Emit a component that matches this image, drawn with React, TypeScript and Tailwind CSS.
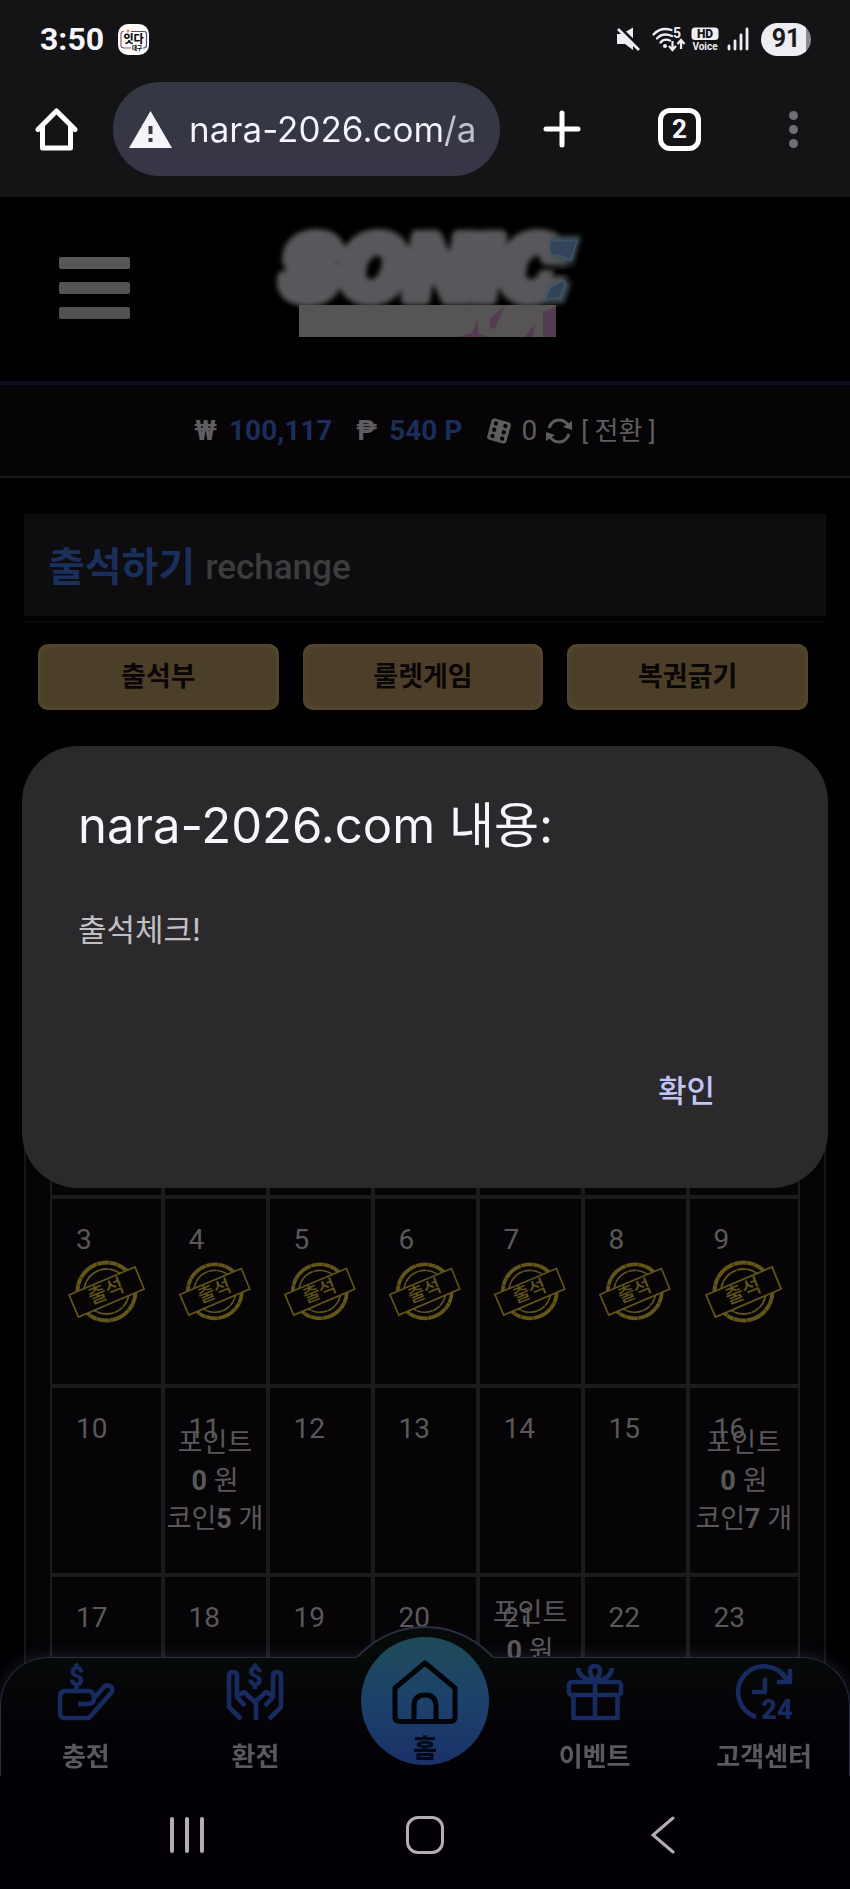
import { useState } from 'react';
import type { ReactNode } from 'react';

type DayItem = {
  day: number | null;
  stamped?: boolean;
  coin?: number;
};

const WEEKDAYS = ['일', '월', '화', '수', '목', '금', '토'];

// coins granted as a bonus on these days
const BONUS: Record<number, number> = { 11: 5, 16: 7, 21: 10 };

const buildWeeks = (): DayItem[][] => {
  const weeks: DayItem[][] = [];
  for (let w = 0; w < 6; w++) {
    const row: DayItem[] = [];
    for (let d = 0; d < 7; d++) {
      const day = w * 7 + d - 4;
      if (day < 1 || day > 31) row.push({ day: null });
      else row.push({ day, stamped: day < 10, coin: BONUS[day] });
    }
    weeks.push(row);
  }
  return weeks;
};

function StatusBar() {
  return (
    <div className="flex h-[78px] shrink-0 items-center pl-10 pr-[39px]">
      <span className="font-['Roboto',sans-serif] text-[32px] leading-10 font-bold">3:50</span>
      <svg className="ml-[14px] h-[31px] w-[31px]" viewBox="0 0 31 31" aria-hidden="true">
        <rect width="31" height="31" rx="10" fill="#fdfdfd" />
        <path d="M6 7.5H5.5Q3 7.5 3 10V21Q3 24 6 24H13" fill="none" stroke="#a0527a" strokeWidth="1.2" />
        <path d="M13 7.5H26Q28.5 7.5 28.5 10V21Q28.5 24 26 24H25" fill="none" stroke="#5b4a78" strokeWidth="1.2" />
        <circle cx="10" cy="7" r="1.5" fill="#e08a55" />
        <text x="15.5" y="18.5" textAnchor="middle" fontSize="11" fontWeight="900" fill="#111" fontFamily="'Noto Sans CJK KR', sans-serif">잇다</text>
        <text x="19" y="25.5" textAnchor="middle" fontSize="5.5" fontWeight="900" fill="#111" fontFamily="'Noto Sans CJK KR', sans-serif">대구</text>
      </svg>

      <div className="ml-auto flex items-center">
        <svg className="h-6 w-6" viewBox="0 0 24 24" aria-hidden="true">
          <path d="M1 7H6L17 0.5V23L9 17H1Z" fill="#eeedf2" />
          <path d="M2 -1L26 22" stroke="#141417" strokeWidth="3" />
          <path d="M2 2L23 23" stroke="#eeedf2" strokeWidth="2.6" />
        </svg>
        <svg className="ml-3 h-6 w-[34px] overflow-visible" viewBox="0 0 34 24" aria-hidden="true">
          <g fill="none" stroke="#eeedf2" strokeWidth="2.3" strokeLinecap="round">
            <path d="M1.5 7.5C6 2.5 13 1 19.5 3" />
            <path d="M5 11.5C8.5 7.5 14 6.5 20 9" />
            <path d="M8.5 15.5C11 12.5 14.5 12 18 13.5" />
          </g>
          <circle cx="13" cy="19" r="2" fill="#eeedf2" />
          <text x="21" y="11" fontSize="14" fontWeight="700" fill="#eeedf2" fontFamily="Roboto, sans-serif">5</text>
          <path d="M20.5 14V22M17 19L20.5 23L24 19M29 22V14M25.5 17L29 13L32.5 17" fill="none" stroke="#eeedf2" strokeWidth="2.2" />
        </svg>
        <svg className="ml-[5px] h-6 w-7 overflow-visible" viewBox="0 0 28 24" aria-hidden="true">
          <rect x="0.5" y="0.5" width="27" height="12.5" rx="3.5" fill="#eeedf2" />
          <text x="14" y="10.8" textAnchor="middle" fontSize="12" fontWeight="900" fill="#141417" fontFamily="Roboto, sans-serif">HD</text>
          <text x="14" y="22.5" textAnchor="middle" fontSize="10" fontWeight="700" fill="#eeedf2" fontFamily="Roboto, sans-serif">Voice</text>
        </svg>
        <svg className="ml-2 h-6 w-[22px]" viewBox="0 0 22 24" aria-hidden="true">
          <path d="M2 19V22M8 14V22M14 8V22M20 2V22" stroke="#eeedf2" strokeWidth="2.8" strokeLinecap="round" />
        </svg>
        <span className="ml-3 flex h-[33px] w-[50px] items-center justify-center rounded-full bg-[linear-gradient(to_right,#eeedf2_90%,#8b8a8f_90%)] font-['Roboto',sans-serif] text-[25px] leading-8 font-bold text-[#1a1a1d]">
          91
        </span>
      </div>
    </div>
  );
}

function BrowserToolbar() {
  return (
    <div className="flex shrink-0 items-center pt-1 pr-[52px] pb-[21px] pl-[35px]">
      <button type="button" aria-label="홈페이지">
        <svg className="h-[43px] w-[43px]" viewBox="0 0 43 43" fill="none" stroke="#fff" strokeWidth="5" strokeLinecap="round" strokeLinejoin="round" aria-hidden="true">
          <path d="M3 21.5L21.5 3L40 21.5" />
          <path d="M7.5 18V40H35.5V18" />
        </svg>
      </button>
      <div className="ml-[35px] flex h-[94px] min-w-0 flex-1 items-center rounded-full bg-linear-to-b from-[#333843] to-[#383546] pr-3 pl-4">
        <svg className="h-[37px] w-[43px] shrink-0" viewBox="0 0 43 37" aria-hidden="true">
          <path d="M21.5 0L43 37H0Z" fill="#f4f4fa" />
          <path d="M21.5 15V23M21.5 27V31" stroke="#36373f" strokeWidth="4" />
        </svg>
        <input
          readOnly
          aria-label="주소"
          value="nara-2026.com/a"
          className="ml-[17px] min-w-0 flex-1 bg-[linear-gradient(to_right,#f4f4fa_84%,#c0c1ce_87%)] bg-clip-text font-['Inter',sans-serif] text-[35px] leading-12 text-transparent outline-none"
        />
      </div>
      <button type="button" aria-label="새 탭" className="ml-[43px]">
        <svg className="h-[38px] w-[38px]" viewBox="0 0 38 38" stroke="#fff" strokeWidth="5" strokeLinecap="round" aria-hidden="true">
          <path d="M19 3V35M3 19H35" />
        </svg>
      </button>
      <button type="button" aria-label="탭 목록" className="ml-[77px] flex h-[43px] w-[43px] items-center justify-center rounded-xl border-[5px] border-white font-['Roboto',sans-serif] text-[26px] leading-8 font-bold">
        2
      </button>
      <button type="button" aria-label="메뉴" className="ml-[88px] flex flex-col gap-[5px]">
        <span className="h-[9px] w-[9px] rounded-full bg-[#6f6e73]" />
        <span className="h-[9px] w-[9px] rounded-full bg-[#6f6e73]" />
        <span className="h-[9px] w-[9px] rounded-full bg-[#6f6e73]" />
      </button>
    </div>
  );
}

function Logo() {
  return (
    <svg className="h-[120px] w-[320px] overflow-visible" viewBox="0 0 320 120" role="img" aria-label="SONIC">
      <defs>
        <filter id="soft" filterUnits="userSpaceOnUse" x="-20" y="-20" width="360" height="160">
          <feGaussianBlur stdDeviation="2.8" />
        </filter>
      </defs>
      <g filter="url(#soft)">
        <text x="16" y="71" fontSize="87" fontWeight="900" fontStyle="italic" fontFamily="Inter, sans-serif" fill="#59595b" stroke="#59595b" strokeWidth="12" strokeLinejoin="round">SONIC</text>
        <path d="M286 8H316L308 36L286 30Z" fill="#3c4c55" />
        <path d="M278 76L299 75L306 54L285 56Z" fill="#3c4c55" />
        <path d="M288 40L320 38L314 51L286 49Z" fill="#000" />
      </g>
      <path d="M285 13H312L306 32L297 28L285 26Z" fill="#33435a" stroke="#405c68" strokeWidth="1.2" />
      <path d="M280 71L295 70L301 55L296 53L285 60Z" fill="#33435a" stroke="#405c68" strokeWidth="1.2" />
      <path d="M250 55V44L252 58Z" fill="#3f5a6b" />
      <rect x="34" y="77" width="257" height="32" fill="#575456" />
      <path d="M192 109L207 105L212 92L214 106L223 109Z" fill="#533c51" />
      <path d="M225 90L240 78L230 100L225 101Z" fill="#533c51" />
      <path d="M260 109L270 96L268 109ZM278 109V84L291 79V109Z" fill="#533c51" />
    </svg>
  );
}

function SiteHeader() {
  return (
    <header className="grid h-[188px] shrink-0 grid-cols-[1fr_auto_1fr] items-center border-b-[4px] border-[#0c0e20] bg-black px-[59px] pb-[2px]">
      <button type="button" aria-label="전체 메뉴" className="flex w-[71px] flex-col gap-[13px]">
        <span className="h-3 w-full rounded-xs bg-[#565858]" />
        <span className="h-3 w-full rounded-xs bg-[#545454]" />
        <span className="h-3 w-full rounded-xs bg-[#525053]" />
      </button>
      <a href="#main" className="block">
        <Logo />
      </a>
    </header>
  );
}

function Balance() {
  return (
    <div className="flex h-[93px] items-center justify-center gap-6 border-b-2 border-[#1a191c] bg-[#060407] font-['Roboto','Noto_Sans_CJK_KR',sans-serif] text-[28px] leading-9 text-[#5e5d5f]">
      <p className="flex gap-3 font-bold">
        <span>₩</span>
        <span className="text-[#1b2d5b]">100,117</span>
      </p>
      <p className="flex gap-3 font-bold">
        <span>₱</span>
        <span className="text-[#1b2d5b]">540 P</span>
      </p>
      <p className="flex items-center gap-[9px]">
        <svg className="h-[26px] w-[26px]" viewBox="0 0 26 26" aria-hidden="true">
          <g transform="rotate(15 13 13)">
            <rect x="3" y="2" width="20" height="22" rx="3" fill="#5e5d5f" />
            <g fill="#060407">
              <circle cx="8" cy="6.5" r="2.2" />
              <circle cx="8" cy="13" r="2.2" />
              <circle cx="8" cy="19.5" r="2.2" />
              <circle cx="18" cy="6.5" r="2.2" />
              <circle cx="18" cy="13" r="2.2" />
              <circle cx="18" cy="19.5" r="2.2" />
            </g>
          </g>
        </svg>
        <span>0</span>
        <svg className="h-[26px] w-[26px]" viewBox="0 0 26 26" aria-hidden="true">
          <path d="M3 10C5 4.5 9 2 13 2C17 2 20 4 22 7" fill="none" stroke="#5e5d5f" strokeWidth="3" />
          <path d="M23 16C21 21.5 17 24 13 24C9 24 6 22 4 19" fill="none" stroke="#5e5d5f" strokeWidth="3" />
          <path d="M26 3V12L17 9Z" fill="#5e5d5f" />
          <path d="M0 23V14L9 17Z" fill="#5e5d5f" />
        </svg>
        <button type="button" className="text-[26px]">[ 전환 ]</button>
      </p>
    </div>
  );
}

function Stamp() {
  return (
    <svg className="w-[71%]" viewBox="0 0 77 63" fill="none" stroke="#61551a" role="img" aria-label="출석">
      <circle cx="38.5" cy="31.5" r="29" strokeWidth="4" strokeDasharray="13 0.4 7 0.3 21 0.5" />
      <circle cx="38.5" cy="31.5" r="22.5" strokeWidth="1.8" strokeDasharray="17 0.5 9 0.4" />
      <path d="M1 35L10.5 57L76 29L67 7Z" fill="#060405" strokeWidth="1.8" />
      <text x="38" y="38" textAnchor="middle" transform="rotate(-22 38 31)" fontSize="20" fontWeight="500" fill="#61551a" stroke="none" fontFamily="'Noto Sans CJK KR', sans-serif">출석</text>
    </svg>
  );
}

function DayCell({ item }: { item: DayItem }) {
  return (
    <td className="relative h-[189px] border-2 border-[#1c1a1d] p-0 align-top">
      {item.day ? <p className="pt-[25px] pl-6 text-[28px] leading-8">{item.day}</p> : null}
      {item.stamped ? (
        <div className="absolute inset-0 flex items-center justify-center">
          <Stamp />
        </div>
      ) : null}
      {item.coin ? (
        <div className="absolute inset-0 flex flex-col justify-center text-center text-[27px] leading-[38px]">
          <p>포인트</p>
          <p><b>0</b> 원</p>
          <p>코인<b>{item.coin}</b> 개</p>
        </div>
      ) : null}
    </td>
  );
}

function AttendanceCalendar() {
  return (
    <section className="mx-6 mt-[110px] border-2 border-[#151417] bg-[#050306] px-6 pb-48 font-['Roboto','Noto_Sans_CJK_KR',sans-serif] text-[#5a585b]">
      <h2 className="flex h-[126px] items-center justify-center text-[28px]">2026년 5월</h2>
      <table className="w-full table-fixed border-separate border-spacing-0 bg-[#060406]">
        <colgroup>
          {WEEKDAYS.map((name, i) => (
            <col key={name} className={i === 0 || i === 6 ? 'w-[15%]' : 'w-[14%]'} />
          ))}
        </colgroup>
        <thead>
          <tr>
            {WEEKDAYS.map(name => (
              <th key={name} className="h-[60px] border-2 border-[#1c1a1d] p-0 text-[27px]">{name}</th>
            ))}
          </tr>
        </thead>
        <tbody>
          {buildWeeks().map((week, i) => (
            <tr key={i}>
              {week.map((item, j) => <DayCell key={j} item={item} />)}
            </tr>
          ))}
        </tbody>
      </table>
    </section>
  );
}

function NavIcon({ children }: { children: ReactNode }) {
  return (
    <svg className="h-14 w-14 overflow-visible" viewBox="0 0 56 56" fill="none" stroke="#182b61" strokeWidth="4.6" strokeLinejoin="round" aria-hidden="true">
      {children}
    </svg>
  );
}

function NavItem({ label, children }: { label: string; children: ReactNode }) {
  return (
    <a href="#nav" className="flex flex-col items-center gap-[17px] pt-[6px]">
      <NavIcon>{children}</NavIcon>
      <span className="text-[26px] leading-9 font-bold whitespace-nowrap text-[#5a595c]">{label}</span>
    </a>
  );
}

function BottomNav() {
  return (
    <nav className="absolute inset-x-0 bottom-0 h-[119px] rounded-t-[48px] border border-b-0 border-[#2b2e44] bg-linear-to-b from-[#060a09] to-[#030005] font-['Noto_Sans_CJK_KR',sans-serif] shadow-[0_0_16px_rgba(110,125,165,0.25)]">
      {/* raised arc behind the home button */}
      <div className="absolute -top-8 left-1/2 h-8 w-[140px] -translate-x-1/2 overflow-hidden">
        <div className="-ml-[22px] h-[184px] w-[184px] rounded-full border-2 border-[#2b2e44] bg-[#060a09]" />
      </div>
      <div className="absolute top-[-1px] left-1/2 h-[2px] w-[136px] -translate-x-1/2 bg-[#060a09]" />
      <div className="relative grid h-full grid-cols-5">
        <NavItem label="충전">
          <path d="M20 40H30Q36 40 36 34Q36 27 30 27H8Q2 27 2 33V49Q2 54 7 54H31L53 29Q56 24 52 22Q48 20 45 24L37 33" />
          <path d="M18.5 0V4M18.5 20V26" />
          <text x="18.5" y="22" textAnchor="middle" fontSize="27" fontWeight="900" fill="#182b61" stroke="none" fontFamily="Roboto, sans-serif">$</text>
        </NavItem>
        <NavItem label="환전">
          <path d="M14 55L2 43V12Q2 8 6 8Q10 8 10 12V33L18 42" />
          <path d="M42 55L54 43V12Q54 8 50 8Q46 8 46 12V33L38 42" />
          <path d="M10 32L17 28L28 38L39 28L46 32M29 38V56" />
          <path d="M28 0V4M28 20V25" />
          <text x="28" y="22" textAnchor="middle" fontSize="27" fontWeight="900" fill="#182b61" stroke="none" fontFamily="Roboto, sans-serif">$</text>
        </NavItem>
        <a href="#home" className="-mt-[21px] flex h-32 w-32 flex-col items-center gap-[5px] justify-self-center rounded-full bg-linear-to-b from-[#1f4b58] via-[#1b426a] to-[#1b3069] pt-[23px]">
          <svg className="h-16 w-[66px] shrink-0" viewBox="0 0 66 64" fill="none" stroke="#020308" strokeWidth="5" strokeLinejoin="round" aria-hidden="true">
            <path d="M33 3L63 28V57Q63 61.5 58 61.5H8Q3 61.5 3 57V28Z" />
            <path d="M22 61V46Q22 35 33 35Q44 35 44 46V61" />
          </svg>
          <span className="text-[26px] leading-9 font-black text-[#060a18]">홈</span>
        </a>
        <NavItem label="이벤트">
          <rect x="2" y="18" width="52" height="13" rx="3" />
          <path d="M6.5 31V54H50.5V31M28 17V54" />
          <path d="M28 17C21 9 22 2 28 2S35 9 28 17M11 4Q12 14 25 17M45 4Q44 14 31 17" />
        </NavItem>
        <NavItem label="고객센터">
          <path d="M20 53A26 26 0 1 1 51 16" />
          <path d="M54 5V18H41M54 18L46 10" />
          <path d="M29 14V28H16" />
          <text x="41" y="55" textAnchor="middle" fontSize="27" fontWeight="900" fill="#182b61" stroke="none" fontFamily="Roboto, sans-serif">24</text>
        </NavItem>
      </div>
    </nav>
  );
}

function SystemNav() {
  return (
    <div className="grid h-[113px] shrink-0 grid-cols-3 place-items-center bg-[#030005] px-[8%] pt-1">
      <button type="button" aria-label="최근 앱" className="flex gap-[11px]">
        <span className="h-9 w-1 rounded-full bg-[#b3aeb5]" />
        <span className="h-9 w-1 rounded-full bg-[#b3aeb5]" />
        <span className="h-9 w-1 rounded-full bg-[#b3aeb5]" />
      </button>
      <button type="button" aria-label="홈" className="h-[38px] w-[38px] rounded-xl border-[3px] border-[#b3aeb5]" />
      <button type="button" aria-label="뒤로">
        <svg className="h-[38px] w-6" viewBox="0 0 24 38" fill="none" stroke="#b3aeb5" strokeWidth="3" strokeLinecap="round" aria-hidden="true">
          <path d="M22 2L2 19L22 36" />
        </svg>
      </button>
    </div>
  );
}

export default function App() {
  const [alertOpen, setAlertOpen] = useState(true);

  return (
    <div className="relative flex h-screen flex-col overflow-hidden bg-[#141417] text-[#f7f6fa]">
      <StatusBar />
      <BrowserToolbar />

      <div className="relative min-h-0 flex-1 overflow-hidden bg-black">
        <main id="main" className="h-full overflow-y-auto bg-[#010003] [scrollbar-width:none]">
          <SiteHeader />
          <Balance />

          <div className="mx-6 mt-9 border-b-2 border-[#09090c] pb-[5px]">
            <h1 className="flex h-[102px] items-center gap-[10px] bg-[#0d0c0f] pt-[6px] pl-6 font-['Roboto','Noto_Sans_CJK_KR',sans-serif] text-[40px] leading-[56px] font-bold text-[#1b2f5c]">
              출석하기
              <small className="text-[35px] font-medium text-[#3d3c3d]">rechange</small>
            </h1>
          </div>

          <div className="mx-6 mt-[21px] grid grid-cols-3 gap-6 pr-[18px] pl-[14px] font-['Noto_Sans_CJK_KR',sans-serif] text-[27px] font-bold text-[#0a0606]">
            <button type="button" className="h-[66px] rounded-[10px] bg-[#4b3f27] pb-1 shadow-[inset_0_0_7px_#5c5138]">출석부</button>
            <button type="button" className="h-[66px] rounded-[10px] bg-[#4d3e29] pb-1 shadow-[inset_0_0_7px_#5e4f38]">룰렛게임</button>
            <button type="button" className="h-[66px] rounded-[10px] bg-[#4b3f27] pb-1 shadow-[inset_0_0_7px_#5c5138]">복권긁기</button>
          </div>

          <AttendanceCalendar />
        </main>
        <BottomNav />
      </div>

      <SystemNav />

      {/* Browser alert */}
      {alertOpen ? (
        <div className="absolute inset-0 flex items-center justify-center px-[22px] pt-11">
          <div role="alertdialog" aria-labelledby="alert-title" className="w-full rounded-[56px] bg-[#2b292c] px-14 pt-[48px] pb-[64px] font-['Inter','Noto_Sans_CJK_KR',sans-serif]">
            <h2 id="alert-title" className="text-[49px] leading-16">nara-2026.com 내용:</h2>
            <p className="mt-[52px] text-[31px] leading-10 text-[#c1bfc4]">출석체크!</p>
            <div className="mt-[110px] flex justify-end pr-[57px]">
              <button type="button" onClick={() => setAlertOpen(false)} className="h-16 text-[31px] font-medium text-[#c0c5f3]">
                확인
              </button>
            </div>
          </div>
        </div>
      ) : null}
    </div>
  );
}
